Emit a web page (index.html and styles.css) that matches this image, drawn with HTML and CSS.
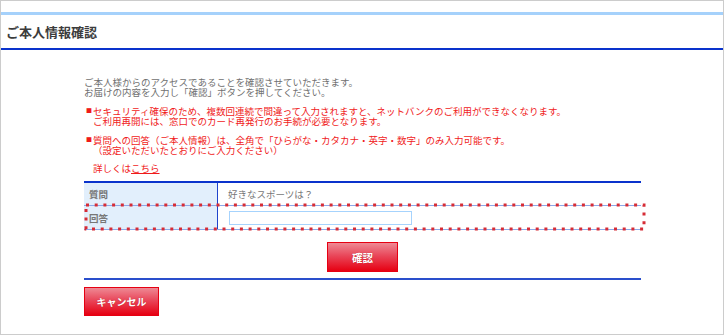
FILE: index.html
```html
<!DOCTYPE html>
<html lang="ja">
<head>
    <meta charset="UTF-8">
    <title>ご本人情報確認</title>
    <link rel="stylesheet" href="styles.css">
</head>
<body>
    <div class="page">
        <div class="head">
            <h1 class="head-title">ご本人情報確認</h1>
        </div>

        <div class="content">
            <p class="intro">ご本人様からのアクセスであることを確認させていただきます。<br>お届けの内容を入力し「確認」ボタンを押してください。</p>

            <p class="note"><span class="mark">■</span>セキュリティ確保のため、複数回連続で間違って入力されますと、ネットバンクのご利用ができなくなります。<br>ご利用再開には、窓口でのカード再発行のお手続が必要となります。</p>

            <p class="note"><span class="mark">■</span>質問への回答（ご本人情報）は、全角で「ひらがな・カタカナ・英字・数字」のみ入力可能です。<br>（設定いただいたとおりにご入力ください）</p>

            <p class="more">詳しくは<a href="#" class="more-link">こちら</a></p>

            <div class="qa-wrap">
                <table class="qa">
                    <tr>
                        <th class="qa-label">質問</th>
                        <td class="qa-value">好きなスポーツは？</td>
                    </tr>
                    <tr>
                        <th class="qa-label">回答</th>
                        <td class="qa-value"><input type="text" class="qa-input"></td>
                    </tr>
                </table>
                <!-- error highlight around the answer row -->
                <svg class="qa-error" width="562" height="28" viewBox="0 0 562 28">
                    <rect x="2" y="2" width="558" height="24" fill="none" stroke="#d62c36" stroke-width="3" stroke-dasharray="3 5.7"/>
                </svg>
            </div>

            <div class="confirm-row">
                <button class="btn">確認</button>
            </div>

            <div class="footer-row">
                <button class="btn btn-cancel">キャンセル</button>
            </div>
        </div>
    </div>
</body>
</html>
```

FILE: styles.css
```css
body {
    margin: 0;
    font-family: "Noto Sans CJK JP", "Noto Sans", sans-serif;
    background-color: #ffffff;
}

.page {
    width: 724px;
    height: 335px;
    box-sizing: border-box;
    border: 1px solid #cccccc;
    padding-top: 11px;
    overflow: hidden;
}

.head {
    border-top: 3px solid #a5d1fb;
    border-bottom: 2px solid #0a33cc;
    height: 33px;
    display: flex;
    align-items: center;
}

.head-title {
    margin: 0 0 0 5px;
    font-size: 13px;
    line-height: 16px;
    font-weight: bold;
    color: #3c3c3c;
}

.content {
    width: 557px;
    margin-left: 83px;
    font-size: 9.5px;
    line-height: 10px;
}

.content p {
    margin: 0;
}

.intro {
    padding-top: 27px;
    color: #707070;
}

.note {
    margin-top: 9px !important;
    padding-left: 9px;
    color: #f01a1a;
}

.mark {
    display: inline-block;
    width: 7px;
    margin-left: -7px;
    font-size: 6px;
    vertical-align: top;
    line-height: 10px;
}

.more {
    margin-top: 8px !important;
    padding-left: 9px;
    color: #f01a1a;
}

.more-link {
    color: #f01a1a;
}

.qa-wrap {
    position: relative;
    margin-top: 8px;
}

.qa {
    width: 100%;
    border-collapse: collapse;
    border-top: 2px solid #0a33cc;
}

.qa th,
.qa td {
    padding: 0;
    border-bottom: 1px solid #8da9e9;
    text-align: left;
    font-size: 9.5px;
    line-height: 10px;
}

.qa tr:first-child th,
.qa tr:first-child td {
    height: 22px;
}

.qa tr:last-child th,
.qa tr:last-child td {
    height: 23px;
}

.qa-label {
    width: 128px;
    padding-left: 5px !important;
    background-color: #e2effc;
    border-right: 1px solid #1f44cc;
    color: #777777;
    font-weight: bold;
}

.qa-value {
    padding-left: 10px !important;
    color: #777777;
}

.qa-input {
    display: block;
    width: 183px;
    height: 14px;
    box-sizing: border-box;
    margin: 0 0 0 1px;
    border: 1px solid #a6d3fd;
    padding: 0 2px;
    font-size: 9px;
    outline: none;
}

.qa-error {
    position: absolute;
    left: 0;
    top: 22px;
}

.confirm-row {
    display: flex;
    justify-content: center;
    margin-top: 12px;
    padding-bottom: 6px;
    border-bottom: 2px solid #2a4fcc;
}

.footer-row {
    margin-top: 7px;
}

.btn {
    width: 71px;
    height: 30px;
    padding: 0;
    border: 1px solid #e60012;
    background: linear-gradient(#ee8994, #e9475a 45%, #e60012);
    color: #ffffff;
    font-family: "Noto Sans CJK JP", sans-serif;
    font-size: 10.5px;
    font-weight: bold;
    text-shadow: 0 0 1px rgba(120, 0, 0, 0.5);
    cursor: pointer;
}

.btn-cancel {
    width: 75px;
    height: 29px;
    font-size: 10px;
}
```
